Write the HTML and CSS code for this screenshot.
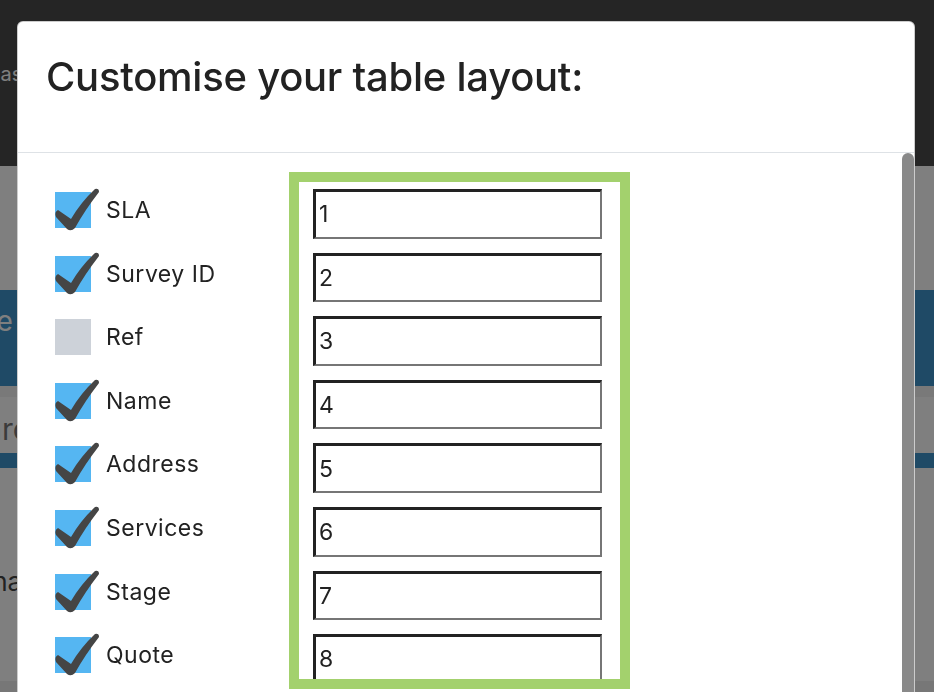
FILE: index.html
```html
<!DOCTYPE html>
<html lang="en">
<head>
    <meta charset="UTF-8">
    <meta name="viewport" content="width=device-width, initial-scale=1.0">
    <title>Surveys</title>
    <link rel="stylesheet" href="styles.css">
</head>
<body>

    <!-- page behind the modal -->
    <div class="page">
        <nav class="navbar"><span class="brand">Dashboard</span></nav>
        <div class="intro"></div>
        <div class="hero"><h2>Welcome</h2></div>
        <div class="toolbar"><span class="search">Search</span></div>
        <div class="table-head"></div>
        <div class="table-body"><span class="cell">Surname</span></div>
        <div class="footer"></div>
    </div>

    <div class="backdrop"></div>

    <div class="modal">
        <div class="modal-content">
            <div class="modal-header">
                <h1>Customise your table layout:</h1>
            </div>
            <div class="modal-body">
                <div class="column-list">
                    <label class="column-option">
                        <svg class="tick" viewBox="0 0 36 36"><rect width="36" height="36" fill="#55b6f2"/><path d="M3 18 L16 27 Q26 10 40 -3 Q44 -4 44 0 Q30 18 20 36 Q16 40 12 37 L1 25 Q-1 20 3 18 Z"/></svg>
                        <span>SLA</span>
                    </label>
                    <label class="column-option">
                        <svg class="tick" viewBox="0 0 36 36"><rect width="36" height="36" fill="#55b6f2"/><path d="M3 18 L16 27 Q26 10 40 -3 Q44 -4 44 0 Q30 18 20 36 Q16 40 12 37 L1 25 Q-1 20 3 18 Z"/></svg>
                        <span>Survey ID</span>
                    </label>
                    <label class="column-option">
                        <svg class="tick" viewBox="0 0 36 36"><rect width="36" height="36" fill="#cdd2d9"/></svg>
                        <span>Ref</span>
                    </label>
                    <label class="column-option">
                        <svg class="tick" viewBox="0 0 36 36"><rect width="36" height="36" fill="#55b6f2"/><path d="M3 18 L16 27 Q26 10 40 -3 Q44 -4 44 0 Q30 18 20 36 Q16 40 12 37 L1 25 Q-1 20 3 18 Z"/></svg>
                        <span>Name</span>
                    </label>
                    <label class="column-option">
                        <svg class="tick" viewBox="0 0 36 36"><rect width="36" height="36" fill="#55b6f2"/><path d="M3 18 L16 27 Q26 10 40 -3 Q44 -4 44 0 Q30 18 20 36 Q16 40 12 37 L1 25 Q-1 20 3 18 Z"/></svg>
                        <span>Address</span>
                    </label>
                    <label class="column-option">
                        <svg class="tick" viewBox="0 0 36 36"><rect width="36" height="36" fill="#55b6f2"/><path d="M3 18 L16 27 Q26 10 40 -3 Q44 -4 44 0 Q30 18 20 36 Q16 40 12 37 L1 25 Q-1 20 3 18 Z"/></svg>
                        <span>Services</span>
                    </label>
                    <label class="column-option">
                        <svg class="tick" viewBox="0 0 36 36"><rect width="36" height="36" fill="#55b6f2"/><path d="M3 18 L16 27 Q26 10 40 -3 Q44 -4 44 0 Q30 18 20 36 Q16 40 12 37 L1 25 Q-1 20 3 18 Z"/></svg>
                        <span>Stage</span>
                    </label>
                    <label class="column-option">
                        <svg class="tick" viewBox="0 0 36 36"><rect width="36" height="36" fill="#55b6f2"/><path d="M3 18 L16 27 Q26 10 40 -3 Q44 -4 44 0 Q30 18 20 36 Q16 40 12 37 L1 25 Q-1 20 3 18 Z"/></svg>
                        <span>Quote</span>
                    </label>
                </div>
                <div class="order-box">
                    <input type="text" value="1">
                    <input type="text" value="2">
                    <input type="text" value="3">
                    <input type="text" value="4">
                    <input type="text" value="5">
                    <input type="text" value="6">
                    <input type="text" value="7">
                    <input type="text" value="8">
                </div>
            </div>
            <div class="scroll-thumb"></div>
        </div>
    </div>

</body>
</html>
```

FILE: styles.css
```css
* {
    box-sizing: border-box;
}
body {
    font-family: Inter, "Noto Sans", sans-serif;
    margin: 0;
    height: 692px;
    overflow: hidden;
    color: #222;
}

/* page behind */
.page {
    background-color: white;
}
.navbar {
    height: 166px;
    background-color: #4a4a4a;
    color: white;
    font-size: 20px;
    padding-top: 62px;
}
.brand {
    display: block;
    margin-left: -14px;
}
.intro {
    height: 124px;
}
.hero {
    height: 96px;
    background-color: #3e94cc;
    color: white;
    overflow: hidden;
}
.hero h2 {
    margin: 14px 0 0 -110px;
    font-size: 28px;
    font-weight: normal;
}
.toolbar {
    height: 67px;
    border-top: 11px solid #f2f2f2;
    font-size: 30px;
    color: #777;
    padding-top: 14px;
    overflow: hidden;
}
.search {
    display: block;
    margin-left: -52px;
}
.table-head {
    height: 15px;
    background-color: #3e94cc;
}
.table-body {
    height: 213px;
    font-size: 26px;
    color: #444;
    padding-top: 98px;
}
.cell {
    display: block;
    margin-left: -50px;
}
.footer {
    height: 40px;
    background-color: #eee;
}

.backdrop {
    position: fixed;
    inset: 0;
    background-color: rgba(0, 0, 0, 0.5);
}

/* modal */
.modal {
    position: fixed;
    inset: 0;
    padding: 21px 19px 0 17px;
}
.modal-content {
    position: relative;
    height: 760px;
    background-color: white;
    border: 1px solid rgba(0, 0, 0, 0.2);
    border-radius: 6px;
    overflow: hidden;
}
.modal-header {
    height: 131px;
    border-bottom: 1px solid #dee2e6;
    padding: 0 28px;
}
.modal-header h1 {
    margin: 0;
    padding-top: 30px;
    font-size: 40px;
    font-weight: 500;
    letter-spacing: -0.25px;
}
.modal-body {
    display: flex;
    padding: 19px 0 0 37px;
}
.column-list {
    width: 234px;
    padding-top: 20px;
    display: flex;
    flex-direction: column;
    gap: 27.6px;
}
.column-option {
    display: flex;
    align-items: center;
    height: 36px;
    font-size: 23px;
    letter-spacing: 0.5px;
}
.column-option span {
    margin-left: 15px;
}
.tick {
    width: 36px;
    height: 36px;
    overflow: visible;
    flex-shrink: 0;
}
.tick path {
    fill: #454545;
}
.order-box {
    width: 341px;
    height: 517px;
    border: 10px solid #a3d16d;
    padding: 7px 18px 0 14px;
    display: flex;
    flex-direction: column;
    gap: 14px;
    overflow: hidden;
}
.order-box input {
    flex-shrink: 0;
    height: 49.6px;
    width: 100%;
    border: 2px solid #767676;
    border-top: 3px solid #222;
    border-left: 3px solid #222;
    padding: 0 3px;
    font-family: inherit;
    font-size: 23px;
    color: #222;
    background-color: white;
}
.scroll-thumb {
    position: absolute;
    top: 131px;
    right: 0;
    bottom: 0;
    width: 12px;
    background-color: #898989;
    border-radius: 6px 6px 0 0;
}
```
